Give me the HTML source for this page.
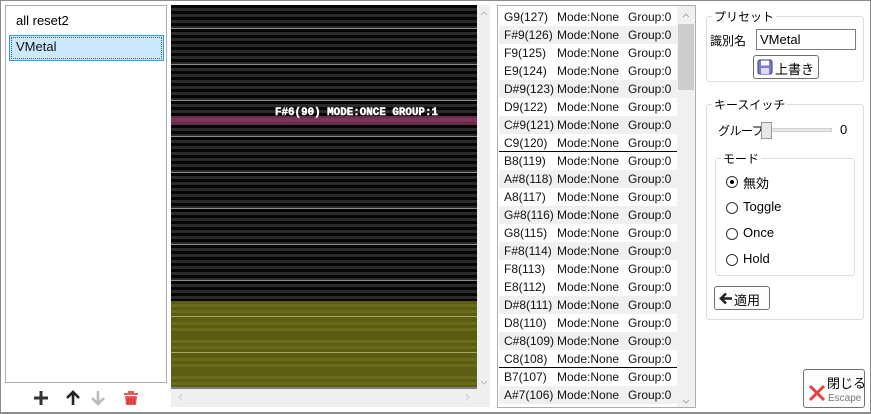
<!DOCTYPE html>
<html><head><meta charset="utf-8"><style>
*{box-sizing:border-box;margin:0;padding:0}
body{width:871px;height:414px;background:#fff;font-family:"Liberation Sans","Noto Sans CJK JP",sans-serif;font-size:12px;color:#000;position:relative;overflow:hidden}
.win{position:absolute;left:0;top:0;width:871px;height:414px;border:1px solid #8a8a8a;border-bottom:2px solid #8a8a8a}
.abs{position:absolute;white-space:nowrap}
.lb{left:5px;top:5px;width:162px;height:378px;border:1px solid #adadad}
.item{position:absolute;left:10px;font-size:13px}
.sel{left:3px;top:29px;width:155px;height:26px;background:#cce8ff;border:1px solid #26a0da}
.sel div{position:absolute;inset:1px;border:1px dotted #555}
.cv{left:171px;top:5px;width:306px;height:384px;
background:repeating-linear-gradient(to bottom,#050505 0 3px,#2a2a2a 3px 6px)}
.sc{left:171px;top:5px;width:319px;height:402px;background:#efefef}
.list{left:497px;top:5px;width:199px;height:403px;border:1px solid #adadad;overflow:hidden}
.row{position:absolute;left:1px;width:178px;height:18px;line-height:18px;white-space:nowrap;color:#111}
.row span{position:absolute}
.g{background:#f0f0f0}
.cl{border-bottom:1px solid #000}
fieldset{position:absolute;border:1px solid #d5dfe5;border-radius:3px}
legend{padding:0 2px;margin-left:5px;font-size:12px}
.btn{position:absolute;border:1px solid #707070;border-radius:3px;background:#fdfdfd;font-size:13px}
.rad{position:absolute;left:724px;font-size:13px}
.rad i{position:absolute;left:2px;top:3px;width:12px;height:12px;border:1px solid #333;border-radius:50%;background:#fff}
.rad b{position:absolute;left:3px;top:3px;width:4px;height:4px;border-radius:50%;background:#000}
.rad span{position:absolute;left:19px;top:0;white-space:nowrap}
</style></head><body>
<div class="win"></div>
<div class="abs lb">
 <div class="item" style="top:7px">all reset2</div>
 <div class="abs sel"><div></div></div>
 <div class="item" style="top:33px;color:#111">VMetal</div>
</div>
<div class="abs sc"></div>
<svg class="abs" style="left:480px;top:10px" width="8" height="6"><path d="M1 5L4 2 7 5" stroke="#bbb" fill="none"/></svg>
<svg class="abs" style="left:480px;top:380px" width="8" height="6"><path d="M1 1L4 4 7 1" stroke="#bbb" fill="none"/></svg>
<svg class="abs" style="left:177px;top:393px" width="6" height="8"><path d="M5 1L2 4 5 7" stroke="#ccc" fill="none"/></svg>
<svg class="abs" style="left:465px;top:393px" width="6" height="8"><path d="M1 1L4 4 1 7" stroke="#ccc" fill="none"/></svg>
<div class="abs cv">
 <svg width="306" height="384" style="position:absolute;left:0;top:0">
  <g fill="#8a8a8a"><rect y="23" width="306" height="1"/><rect y="59" width="306" height="1"/><rect y="95" width="306" height="1"/><rect y="131" width="306" height="1"/><rect y="167" width="306" height="1"/><rect y="203" width="306" height="1"/><rect y="239" width="306" height="1"/><rect y="275" width="306" height="1"/></g>
  <rect y="111" width="306" height="9" fill="#6a2a4a"/>
  <rect y="113" width="306" height="4" fill="#7a3658"/>
  <rect y="296" width="306" height="87" fill="#5c5c12"/>
  <g fill="#6b6b1c"><rect y="299" width="306" height="3"/><rect y="305" width="306" height="3"/><rect y="317" width="306" height="3"/><rect y="323" width="306" height="3"/><rect y="335" width="306" height="3"/><rect y="341" width="306" height="3"/><rect y="353" width="306" height="3"/><rect y="359" width="306" height="3"/><rect y="371" width="306" height="3"/><rect y="377" width="306" height="3"/></g>
  <g fill="#a8a860"><rect y="311" width="306" height="1"/><rect y="347" width="306" height="1"/></g>
  <rect y="382" width="306" height="2" fill="#808080"/>
  <text x="104" y="110" fill="#fff" stroke="#fff" stroke-width="0.5" font-family="Liberation Mono,monospace" font-weight="bold" font-size="11" textLength="163" lengthAdjust="spacingAndGlyphs">F#6(90) MODE:ONCE GROUP:1</text>
 </svg>
</div>
<div class="abs list">
 <div class="abs" style="left:179px;top:0;width:18px;height:401px;background:#f0f0f0"></div>
 <div class="abs" style="left:180px;top:18px;width:16px;height:66px;background:#cdcdcd"></div>
 <svg class="abs" style="left:184px;top:6px" width="8" height="6"><path d="M1 5L4 2 7 5" stroke="#aaa" fill="none"/></svg>
 <svg class="abs" style="left:184px;top:393px" width="8" height="6"><path d="M1 1L4 4 7 1" stroke="#aaa" fill="none"/></svg>
 <div id="rows"></div>
</div>
<script>
var n=["G9(127)","F#9(126)","F9(125)","E9(124)","D#9(123)","D9(122)","C#9(121)","C9(120)","B8(119)","A#8(118)","A8(117)","G#8(116)","G8(115)","F#8(114)","F8(113)","E8(112)","D#8(111)","D8(110)","C#8(109)","C8(108)","B7(107)","A#7(106)"];
var h="";n.forEach(function(s,i){var c=(s.indexOf("#")>0?"g ":"")+(/^C\d/.test(s)?"cl":"");
h+='<div class="row '+c+'" style="top:'+(2+i*18)+'px"><span style="left:5px">'+s+'</span><span style="left:58px">Mode:None</span><span style="left:129px">Group:0</span></div>';});
document.getElementById("rows").innerHTML=h;
</script>
<svg class="abs" style="left:32px;top:390px" width="110" height="16">
 <path d="M9 1v14M2 8h14" stroke="#333" stroke-width="3"/>
 <path d="M41 15V3M35 8l6-6 6 6" stroke="#222" stroke-width="2.6" fill="none"/>
 <path d="M66 1v12M60 8l6 6 6-6" stroke="#bbb" stroke-width="2.6" fill="none"/>
 <g fill="#e85a5a"><rect x="92" y="3" width="14" height="2"/><rect x="96" y="1" width="6" height="2"/><path d="M93 6h12l-1 9h-10z"/></g>
 <path d="M96 8v6M99 8v6M102 8v6" stroke="#b22" stroke-width="1"/>
</svg>
<fieldset style="left:706px;top:8px;width:158px;height:74px"><legend>プリセット</legend></fieldset>
<div class="abs" style="left:710px;top:32px;font-size:12px">識別名</div>
<div class="abs" style="left:756px;top:29px;width:100px;height:21px;border:1px solid #7a7a7a;font-size:13px;padding:2px 3px">VMetal</div>
<div class="btn" style="left:753px;top:55px;width:66px;height:24px">
 <svg class="abs" style="left:3px;top:3px" width="16" height="16"><rect x="1" y="1" width="14" height="14" rx="2" fill="#7b7bd0" stroke="#3a3a8a"/><rect x="4" y="1.5" width="8" height="5" fill="#fff"/><rect x="4" y="9" width="8" height="6" fill="#dde"/></svg>
 <span class="abs" style="left:21px;top:3px">上書き</span></div>
<fieldset style="left:706px;top:96px;width:158px;height:224px"><legend>キースイッチ</legend></fieldset>
<div class="abs" style="left:718px;top:122px;font-size:12px;letter-spacing:-0.5px">グループ</div>
<div class="abs" style="left:764px;top:128px;width:68px;height:4px;background:#e7e7e7;border:1px solid #d0d0d0"></div>
<div class="abs" style="left:761px;top:122px;width:11px;height:17px;background:#e8e8e8;border:1px solid #999"></div>
<div class="abs" style="left:840px;top:122px;font-size:13px">0</div>
<fieldset style="left:715px;top:150px;width:140px;height:126px"><legend>モード</legend></fieldset>
<div class="rad" style="top:173px"><i><b></b></i><span>無効</span></div>
<div class="rad" style="top:199px"><i></i><span>Toggle</span></div>
<div class="rad" style="top:225px"><i></i><span>Once</span></div>
<div class="rad" style="top:251px"><i></i><span>Hold</span></div>
<div class="btn" style="left:714px;top:286px;width:56px;height:24px">
 <svg class="abs" style="left:4px;top:5px" width="14" height="13"><path d="M13 6.5H3M7 1.5L2 6.5l5 5" stroke="#222" stroke-width="2.6" fill="none"/></svg>
 <span class="abs" style="left:19px;top:3px">適用</span></div>
<div class="btn" style="left:803px;top:369px;width:62px;height:39px">
 <svg class="abs" style="left:4px;top:14px" width="18" height="18"><path d="M2 2l14 14M16 2L2 16" stroke="#e84040" stroke-width="3"/></svg>
 <span class="abs" style="left:23px;top:3px;font-size:13px">閉じる</span>
 <span class="abs" style="left:24px;top:23px;font-size:10px;color:#777">Escape</span></div>
</body></html>
